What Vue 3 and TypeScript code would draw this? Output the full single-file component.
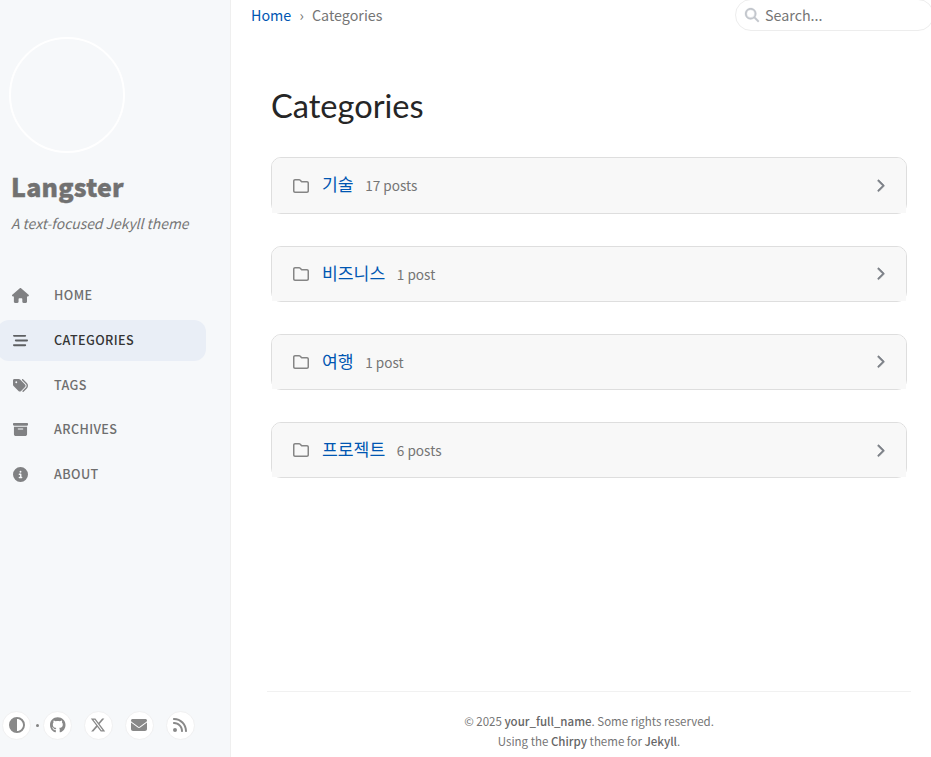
<script setup lang="ts">
interface Icon {
  width: number
  path: string
}

interface NavItem {
  label: string
  icon: Icon
  active?: boolean
}

interface Category {
  name: string
  count: string
}

const icon = (width: number, path: string): Icon => ({ width, path })

const search = icon(512, 'M416 208c0 45.9-14.9 88.3-40 122.7L502.6 457.4c12.5 12.5 12.5 32.8 0 45.3s-32.8 12.5-45.3 0L330.7 376c-34.4 25.2-76.8 40-122.7 40C93.1 416 0 322.9 0 208S93.1 0 208 0S416 93.1 416 208zM208 352a144 144 0 1 0 0-288 144 144 0 1 0 0 288z')
const folder = icon(512, 'M0 96C0 60.7 28.7 32 64 32H196.1c19.1 0 37.4 7.6 50.9 21.1L289.9 96H448c35.3 0 64 28.7 64 64V416c0 35.3-28.7 64-64 64H64c-35.3 0-64-28.7-64-64V96zM64 80c-8.8 0-16 7.2-16 16V416c0 8.8 7.2 16 16 16H448c8.8 0 16-7.2 16-16V160c0-8.8-7.2-16-16-16H286.6c-10.6 0-20.8-4.2-28.3-11.7L213.1 87c-4.5-4.5-10.6-7-17-7H64z')
const chevron = icon(320, 'M310.6 233.4c12.5 12.5 12.5 32.8 0 45.3l-192 192c-12.5 12.5-32.8 12.5-45.3 0s-12.5-32.8 0-45.3L242.7 256 73.4 86.6c-12.5-12.5-12.5-32.8 0-45.3s32.8-12.5 45.3 0l192 192z')
const halfCircle = icon(512, 'M448 256c0-106-86-192-192-192V448c106 0 192-86 192-192zM0 256a256 256 0 1 1 512 0A256 256 0 1 1 0 256z')

const nav: NavItem[] = [
  {
    label: 'HOME',
    icon: icon(576, 'M575.8 255.5c0 18-15 32.1-32 32.1h-32l.7 160.2c0 2.7-.2 5.4-.5 8.1V472c0 22.1-17.9 40-40 40H456c-1.1 0-2.2 0-3.3-.1c-1.4 .1-2.8 .1-4.2 .1H416 392c-22.1 0-40-17.9-40-40V448 384c0-17.7-14.3-32-32-32H256c-17.7 0-32 14.3-32 32v64 24c0 22.1-17.9 40-40 40H160 128.1c-1.5 0-3-.1-4.5-.2c-1.2 .1-2.4 .2-3.6 .2H104c-22.1 0-40-17.9-40-40V360c0-.9 0-1.9 .1-2.8V287.6H32c-18 0-32-14-32-32.1c0-9 3-17 10-24L266.4 8c7-7 15-8 22-8s15 2 21 7L564.8 231.5c8 7 12 15 11 24z'),
  },
  {
    label: 'CATEGORIES',
    active: true,
    icon: icon(512, 'M0 96C0 78.3 14.3 64 32 64H416c17.7 0 32 14.3 32 32s-14.3 32-32 32H32C14.3 128 0 113.7 0 96zM64 256c0-17.7 14.3-32 32-32H480c17.7 0 32 14.3 32 32s-14.3 32-32 32H96c-17.7 0-32-14.3-32-32zM448 416c0 17.7-14.3 32-32 32H32c-17.7 0-32-14.3-32-32s14.3-32 32-32H416c17.7 0 32 14.3 32 32z'),
  },
  {
    label: 'TAGS',
    icon: icon(512, 'M345 39.1L472.8 168.4c52.4 53 52.4 138.2 0 191.2L360.8 472.9c-9.3 9.4-24.5 9.5-33.9 .2s-9.5-24.5-.2-33.9L438.6 325.9c33.9-34.3 33.9-89.4 0-123.7L310.9 72.9c-9.3-9.4-9.2-24.6 .2-33.9s24.6-9.2 33.9 .2zM0 229.5V80C0 53.5 21.5 32 48 32H197.5c17 0 33.3 6.7 45.3 18.7l168 168c25 25 25 65.5 0 90.5L277.3 442.7c-25 25-65.5 25-90.5 0l-168-168C6.7 262.7 0 246.5 0 229.5zM144 144a32 32 0 1 0 -64 0 32 32 0 1 0 64 0z'),
  },
  {
    label: 'ARCHIVES',
    icon: icon(512, 'M32 32H480c17.7 0 32 14.3 32 32V96c0 17.7-14.3 32-32 32H32C14.3 128 0 113.7 0 96V64C0 46.3 14.3 32 32 32zm0 128H480V416c0 35.3-28.7 64-64 64H96c-35.3 0-64-28.7-64-64V160zm128 80c0 8.8 7.2 16 16 16H336c8.8 0 16-7.2 16-16s-7.2-16-16-16H176c-8.8 0-16 7.2-16 16z'),
  },
  {
    label: 'ABOUT',
    icon: icon(512, 'M256 512A256 256 0 1 0 256 0a256 256 0 1 0 0 512zM216 336h24V272H216c-13.3 0-24-10.7-24-24s10.7-24 24-24h48c13.3 0 24 10.7 24 24v88h8c13.3 0 24 10.7 24 24s-10.7 24-24 24H216c-13.3 0-24-10.7-24-24s10.7-24 24-24zm40-208a32 32 0 1 1 0 64 32 32 0 1 1 0-64z'),
  },
]

const contacts: Icon[] = [
  icon(496, 'M165.9 397.4c0 2-2.3 3.6-5.2 3.6-3.3.3-5.6-1.3-5.6-3.6 0-2 2.3-3.6 5.2-3.6 3-.3 5.6 1.3 5.6 3.6zM244.8 8C106.1 8 0 113.3 0 252c0 110.9 69.8 205.8 169.5 239.2 12.8 2.3 17.3-5.6 17.3-12.1 0-6.2-.3-40.4-.3-61.4 0 0-70 15-84.7-29.8 0 0-11.4-29.1-27.8-36.6 0 0-22.9-15.7 1.6-15.4 0 0 24.9 2 38.6 25.8 21.9 38.6 58.6 27.5 72.9 20.9 2.3-16 8.8-27.1 16-33.7-55.9-6.2-112.3-14.3-112.3-110.5 0-27.5 7.6-41.3 23.6-58.9-2.6-6.5-11.1-33.3 2.6-67.9 20.9-6.5 69 27 69 27 20-5.6 41.5-8.5 62.8-8.5s42.8 2.9 62.8 8.5c0 0 48.1-33.6 69-27 13.7 34.7 5.2 61.4 2.6 67.9 16 17.7 25.8 31.5 25.8 58.9 0 96.5-58.9 104.2-114.8 110.5 9.2 7.9 17 22.9 17 46.4 0 33.7-.3 75.4-.3 83.6 0 6.5 4.6 14.4 17.3 12.1C428.2 457.8 496 362.9 496 252 496 113.3 383.5 8 244.8 8z'),
  icon(512, 'M389.2 48h70.6L305.6 224.2 487 464H345L233.7 318.6 106.5 464H35.8L200.7 275.5 26.8 48H172.4L272.9 180.9 389.2 48zM364.4 421.8h39.1L151.1 88h-42L364.4 421.8z'),
  icon(512, 'M48 64C21.5 64 0 85.5 0 112c0 15.1 7.1 29.3 19.2 38.4L236.8 313.6c11.4 8.5 27 8.5 38.4 0L492.8 150.4c12.1-9.1 19.2-23.3 19.2-38.4c0-26.5-21.5-48-48-48H48zM0 176V384c0 35.3 28.7 64 64 64H448c35.3 0 64-28.7 64-64V176L294.4 339.2c-22.8 17.1-54 17.1-76.8 0L0 176z'),
  icon(448, 'M0 64C0 46.3 14.3 32 32 32c229.8 0 416 186.2 416 416c0 17.7-14.3 32-32 32s-32-14.3-32-32C384 253.6 226.4 96 32 96C14.3 96 0 81.7 0 64zM0 416a64 64 0 1 1 128 0A64 64 0 1 1 0 416zM32 160c159.1 0 288 128.9 288 288c0 17.7-14.3 32-32 32s-32-14.3-32-32c0-123.7-100.3-224-224-224c-17.7 0-32-14.3-32-32s14.3-32 32-32z'),
]

const categories: Category[] = [
  { name: '기술', count: '17 posts' },
  { name: '비즈니스', count: '1 post' },
  { name: '여행', count: '1 post' },
  { name: '프로젝트', count: '6 posts' },
]
</script>

<template>
  <div class="layout">
    <aside class="sidebar">
      <div class="avatar"></div>
      <div class="site-title">Langster</div>
      <div class="site-subtitle">A text-focused Jekyll theme</div>

      <nav class="nav">
        <a v-for="item in nav" :key="item.label" class="nav-link" :class="{ active: item.active }">
          <span class="nav-icon">
            <svg class="icon" :viewBox="`0 0 ${item.icon.width} 512`"><path :d="item.icon.path" /></svg>
          </span>
          <span class="nav-label">{{ item.label }}</span>
        </a>
      </nav>

      <div class="sidebar-bottom">
        <button class="round">
          <svg class="icon" :viewBox="`0 0 ${halfCircle.width} 512`"><path :d="halfCircle.path" /></svg>
        </button>
        <span class="dot"></span>
        <a v-for="(contact, index) in contacts" :key="index" class="round">
          <svg class="icon" :viewBox="`0 0 ${contact.width} 512`"><path :d="contact.path" /></svg>
        </a>
      </div>
    </aside>

    <div class="main">
      <header class="topbar">
        <div class="breadcrumb">
          <a class="crumb-link">Home</a>
          <span class="separator">›</span>
          <span>Categories</span>
        </div>
        <div class="search">
          <svg class="icon" :viewBox="`0 0 ${search.width} 512`"><path :d="search.path" /></svg>
          <span class="placeholder">Search...</span>
        </div>
      </header>

      <main class="content">
        <h1>Categories</h1>
        <div class="cards">
          <div v-for="category in categories" :key="category.name" class="card">
            <div class="card-header">
              <svg class="icon folder" :viewBox="`0 0 ${folder.width} 512`"><path :d="folder.path" /></svg>
              <a class="category-name">{{ category.name }}</a>
              <span class="category-count">{{ category.count }}</span>
              <svg class="icon chevron" :viewBox="`0 0 ${chevron.width} 512`"><path :d="chevron.path" /></svg>
            </div>
          </div>
        </div>
      </main>

      <footer class="footer">
        <p class="copyright">© 2025 <b>your_full_name</b>. Some rights reserved.</p>
        <p class="credits">Using the <b>Chirpy</b> theme for <b>Jekyll</b>.</p>
      </footer>
    </div>
  </div>
</template>

<style>
body {
  background: #fff;
  overflow: hidden;
}
</style>

<style scoped>
* {
  box-sizing: border-box;
}

.layout {
  display: flex;
  width: 100vw;
  height: 100vh;
  overflow: hidden;
  color: #757575;
  font-family: "Noto Sans CJK KR", "Noto Sans", sans-serif;
  font-size: 14.3px;
  white-space: nowrap;
}

.icon {
  display: block;
  flex: none;
  height: 1em;
  overflow: visible;
  fill: currentColor;
}

.sidebar {
  display: flex;
  flex: none;
  flex-direction: column;
  width: 231px;
  padding-top: 37px;
  border-right: 1px solid #efefef;
  background: #f6f8fa;
}

.avatar {
  width: 116px;
  height: 116px;
  margin-left: 9px;
  border: 2px solid #fff;
  border-radius: 50%;
}

.site-title {
  margin: 14px 0 0 11px;
  color: #717171;
  font-size: 25px;
  font-weight: 900;
  letter-spacing: 0.2px;
  line-height: 38px;
  -webkit-text-stroke: 0.4px currentColor;
}

.site-subtitle {
  margin: 6px 0 0 11px;
  font-size: 13.9px;
  font-style: italic;
  line-height: 24px;
}

.nav {
  display: flex;
  flex-direction: column;
  gap: 3.8px;
  margin-top: 40px;
}

.nav-link {
  display: flex;
  align-items: center;
  width: 209px;
  height: 41px;
  margin-left: -3px;
  border-radius: 12px;
  color: #6e6e6e;
}

.nav-link.active {
  background: #e9eef6;
  color: #343434;
}

.nav-icon {
  display: flex;
  justify-content: center;
  width: 41px;
  margin-left: 3px;
  color: #808183;
  font-size: 15px;
}

.active .nav-icon {
  color: #5d5f62;
}

.nav-label {
  margin-left: 13px;
  padding-bottom: 2px;
  font-size: 12.6px;
  font-weight: 500;
  letter-spacing: 0.4px;
}

.sidebar-bottom {
  display: flex;
  align-items: center;
  gap: 11.8px;
  margin: auto 0 17.5px 2.2px;
}

.round {
  display: flex;
  flex: none;
  align-items: center;
  justify-content: center;
  width: 29px;
  height: 29px;
  padding: 0;
  border: 1px solid #f0f0f1;
  border-radius: 50%;
  background: #fff;
  color: #898989;
  font-size: 16px;
}

.dot {
  width: 3px;
  height: 3px;
  margin: 0 -7.6px 0 -7px;
  border-radius: 50%;
  background: #828282;
}

.main {
  display: flex;
  flex: 1;
  flex-direction: column;
  min-width: 0;
}

.topbar {
  display: flex;
  flex: none;
  justify-content: space-between;
  height: 31px;
  padding-left: 20px;
}

.breadcrumb {
  display: flex;
  gap: 8.2px;
  line-height: 29px;
}

.crumb-link,
.category-name {
  color: #0056b2;
}

.search {
  display: flex;
  gap: 6px;
  align-items: center;
  width: 199px;
  margin: -1px -3px 0 0;
  padding-left: 9px;
  border: 1px solid #ededed;
  border-radius: 16px;
}

.search .icon {
  color: #c2c6cc;
  font-size: 14px;
  stroke: currentColor;
  stroke-width: 12px;
}

.placeholder {
  padding-bottom: 2px;
}

.content {
  flex: 1;
  padding: 0 24px 0 40px;
}

h1 {
  margin: 51px 0 0;
  color: #262626;
  font-family: Lato, sans-serif;
  font-size: 32.6px;
  font-weight: 400;
  line-height: 48px;
}

.cards {
  display: flex;
  flex-direction: column;
  gap: 32px;
  margin-top: 27.4px;
}

.card {
  height: 56.2px;
  border: 1px solid #dedede;
  border-radius: 10px;
}

.card-header {
  display: flex;
  align-items: center;
  height: 100%;
  padding: 0 21px;
  border-radius: 9px 9px 0 0;
  background: #f8f8f8;
}

.folder {
  margin-top: 0.6px;
  margin-left: 0.3px;
  color: #858585;
  font-size: 16px;
}

.category-name {
  margin-left: 12.7px;
  padding-bottom: 3px;
  font-size: 17.2px;
}

.category-count {
  margin-left: 11.6px;
  font-size: 13.6px;
}

.chevron {
  margin-top: 0.6px;
  margin-right: 0.7px;
  margin-left: auto;
  color: #7c8087;
  font-size: 13.4px;
  stroke: currentColor;
  stroke-width: 18px;
}

.footer {
  height: 66px;
  margin: 0 20px 0 36px;
  padding-top: 19px;
  border-top: 1px solid #f1f1f1;
  font-size: 11.5px;
  line-height: 20px;
  text-align: center;
}

.footer p {
  margin: 0;
}

.footer b {
  font-weight: 500;
  color: #666;
}
</style>
